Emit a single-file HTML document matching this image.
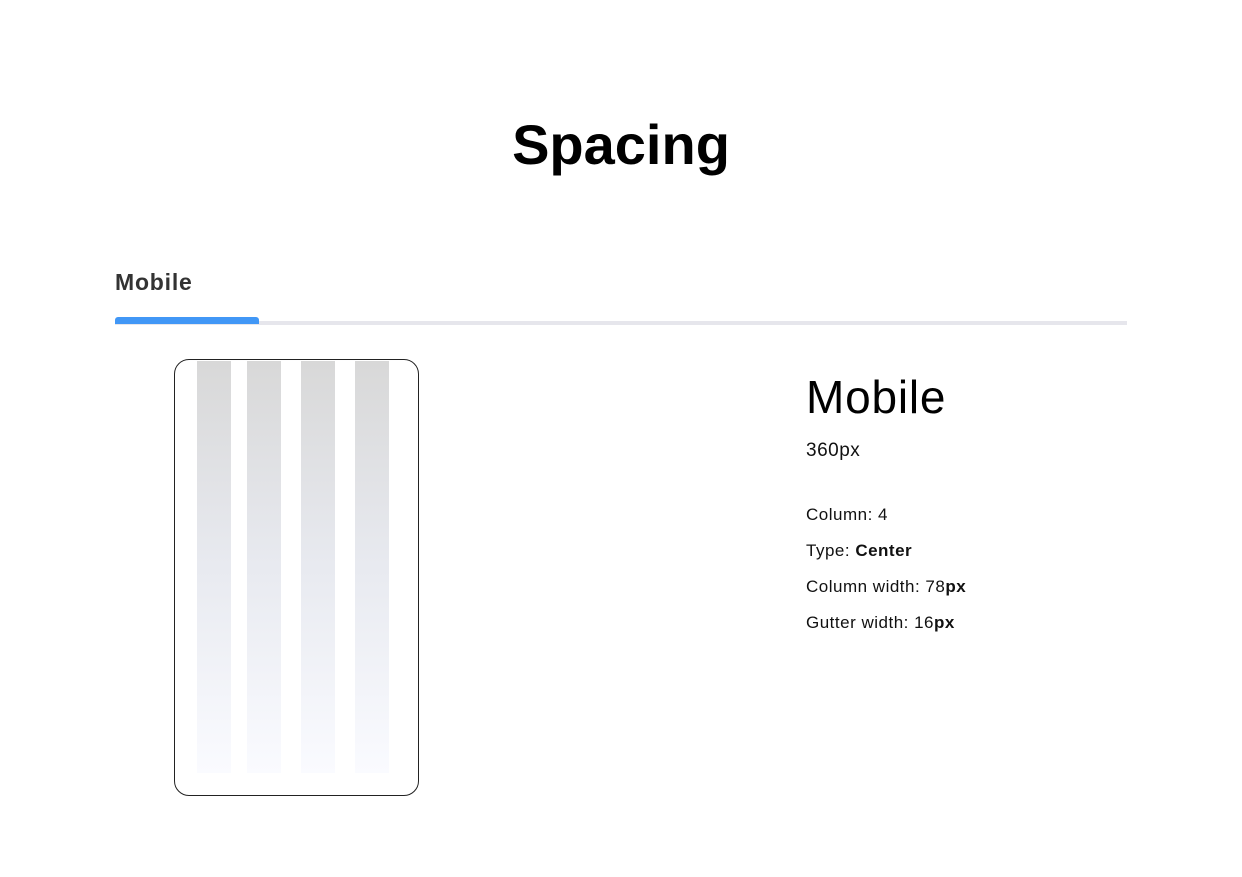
<!DOCTYPE html>
<html><head><style>
body{margin:0;width:1242px;height:877px;background:#fff;font-family:"Liberation Sans",sans-serif;position:relative;overflow:hidden}
.a{position:absolute}
.col{position:absolute;top:361px;height:412px;width:34px;background:linear-gradient(#d8d8d8,#e8eaf0 50%,#fafbff)}
p{margin:0;position:absolute;left:806px;font-size:17px;letter-spacing:0.5px;color:#111}
</style></head><body>
<div class="a" style="left:0;width:1242px;top:112px;text-align:center;font-size:56px;font-weight:bold;color:#000">Spacing</div>
<div class="a" style="left:115px;top:269px;font-size:23px;letter-spacing:0.8px;font-weight:bold;color:#333">Mobile</div>
<div class="a" style="left:115px;top:321px;width:1012px;height:4px;background:#e6e6ec"></div>
<div class="a" style="left:115px;top:317px;width:144px;height:7px;background:#4197f6;border-radius:3px 3px 0 0"></div>
<div class="a" style="left:174px;top:359px;width:245px;height:437px;border:1px solid #222;border-radius:15px;box-sizing:border-box"></div>
<div class="col" style="left:197px"></div>
<div class="col" style="left:247px"></div>
<div class="col" style="left:301px"></div>
<div class="col" style="left:355px"></div>
<p style="top:370px;font-size:46px;letter-spacing:0.8px;color:#000">Mobile</p>
<p style="top:440px;font-size:19px">360px</p>
<p style="top:505px">Column: 4</p>
<p style="top:541px">Type: <b>Center</b></p>
<p style="top:577px">Column width: 78<b>px</b></p>
<p style="top:613px">Gutter width: 16<b>px</b></p>
</body></html>
